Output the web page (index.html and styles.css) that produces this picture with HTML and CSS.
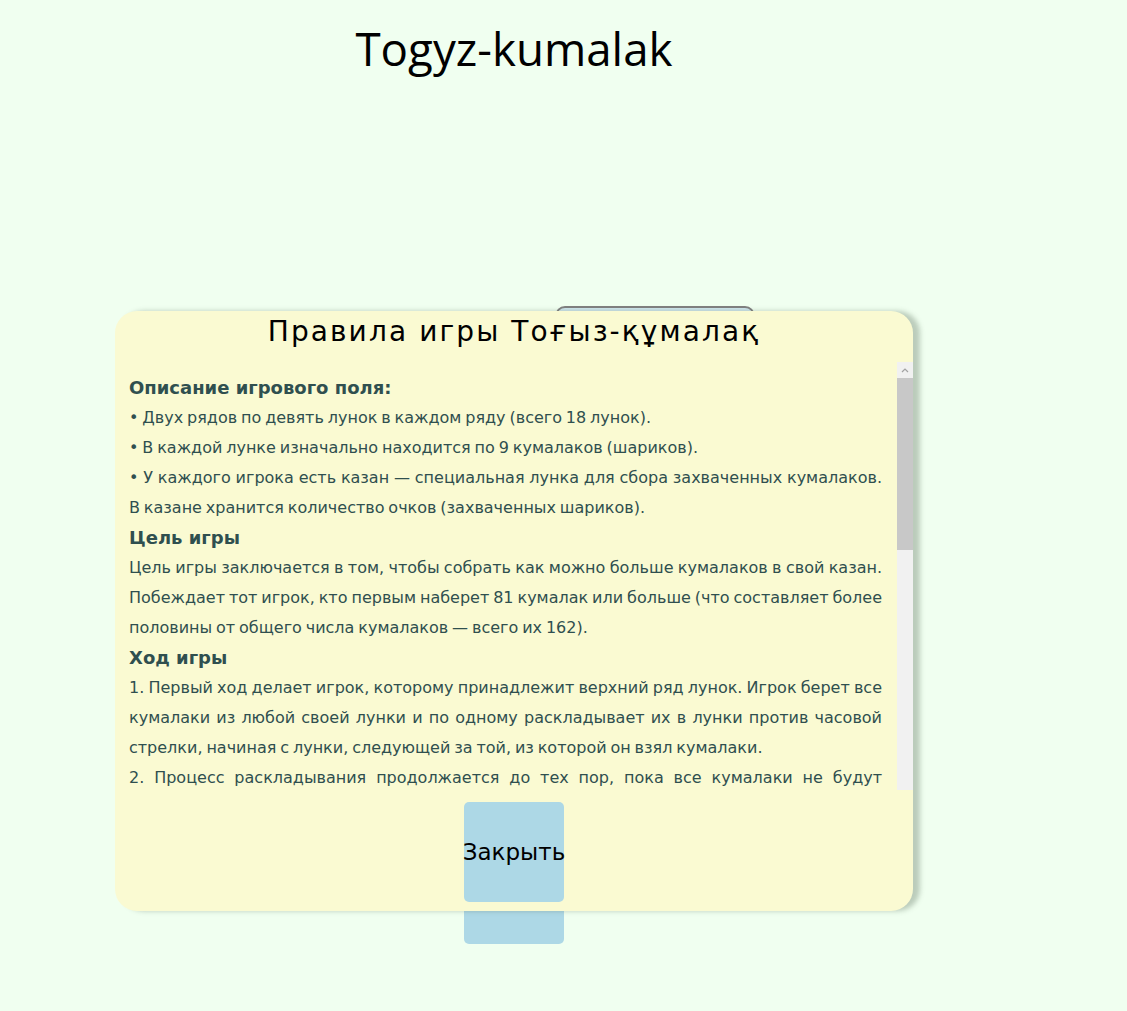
FILE: index.html
```html
<!DOCTYPE html>
<html lang="ru">
<head>
<meta charset="utf-8">
<title>Togyz-kumalak</title>
<link rel="stylesheet" href="styles.css">
</head>
<body>
<div class="page">
  <h1 class="title">Togyz-kumalak</h1>
  <button class="rules-btn"></button>
  <div class="under-btn"></div>
</div>
<div class="modal">
  <h2 class="modal-title">Правила игры Тоғыз-құмалақ</h2>
  <div class="rules-wrap">
    <div class="rules">
      <h3>Описание игрового поля:</h3>
      <p>• Двух рядов по девять лунок в каждом ряду (всего 18 лунок).</p>
      <p>• В каждой лунке изначально находится по 9 кумалаков (шариков).</p>
      <p>• У каждого игрока есть казан — специальная лунка для сбора захваченных кумалаков. В&nbsp;казане хранится количество очков (захваченных шариков).</p>
      <h3>Цель игры</h3>
      <p>Цель игры заключается в том, чтобы собрать как можно больше кумалаков в свой казан. Побеждает тот игрок, кто первым наберет 81 кумалак или больше (что составляет более половины от общего числа кумалаков — всего их 162).</p>
      <h3>Ход игры</h3>
      <p>1. Первый ход делает игрок, которому принадлежит верхний ряд лунок. Игрок берет все кумалаки из любой своей лунки и по одному раскладывает их в лунки против часовой стрелки, начиная с лунки, следующей за той, из которой он взял кумалаки.</p>
      <p>2. Процесс раскладывания продолжается до тех пор, пока все кумалаки не будут разложены. Если в лунке находится только один кумалак, он перекладывается в следующую лунку.</p>
      <p>3. Если последний кумалак попадает в лунку противника и количество кумалаков в ней становится чётным, игрок забирает все кумалаки из этой лунки в свой казан.</p>
      <h3>Туздык</h3>
      <p>4. Если последний кумалак попадает в лунку противника и в ней оказывается ровно три кумалака, игрок может объявить эту лунку своим туздыком.</p>
      <h3>Окончание игры</h3>
      <p>Игра заканчивается, когда один из игроков набирает 82 кумалака.</p>
    </div>
    <div class="scrollbar" aria-hidden="true">
      <div class="sb-arrow">
        <svg width="16" height="16" viewBox="0 0 16 16"><path d="M5 10 L8 7 L11 10" fill="none" stroke="#a3a3a3" stroke-width="1.2"/></svg>
      </div>
      <div class="sb-thumb"></div>
      <div class="sb-track"></div>
    </div>
  </div>
  <div class="modal-actions">
    <button class="close-btn">Закрыть</button>
  </div>
</div>
</body>
</html>
```

FILE: styles.css
```css
html, body {
  margin: 0;
  padding: 0;
}
body {
  background: #f0fff0;
  min-height: 1011px;
  font-family: "DejaVu Sans", Verdana, sans-serif;
}
.page {
  width: 1028px;
  text-align: center;
}
.title {
  margin: 0;
  padding-top: 20px;
  font-family: "Open Sans", "Noto Sans", sans-serif;
  font-weight: 400;
  font-size: 45.7px;
  line-height: 56px;
  color: #000;
}
.rules-btn {
  position: absolute;
  left: 555px;
  top: 306px;
  width: 200px;
  height: 40px;
  background: #cfe7ee;
  border: 2px solid #808080;
  border-radius: 10px;
}
.under-btn {
  position: absolute;
  left: 464px;
  top: 860px;
  width: 100px;
  height: 84px;
  background: #add8e6;
  border-radius: 5px;
}
.modal {
  position: absolute;
  left: 115px;
  top: 311px;
  width: 798px;
  height: 600px;
  box-sizing: border-box;
  padding: 3px 0 10px 14px;
  background: #fafad2;
  border-radius: 22px;
  box-shadow: 7px 0 5px rgba(90, 110, 90, 0.35);
  display: flex;
  flex-direction: column;
}
.modal-title {
  margin: 0 0 12px;
  padding-right: 14px;
  font-family: "DejaVu Sans", Verdana, sans-serif;
  font-weight: 400;
  font-size: 28px;
  letter-spacing: 2.1px;
  line-height: 36px;
  text-align: center;
  color: #000;
}
.rules-wrap {
  height: 428px;
  display: flex;
}
.rules {
  flex: 1;
  min-width: 0;
  overflow: hidden;
  padding: 11px 15px 0 0;
  color: #2f4f4f;
  font-size: 16px;
  word-spacing: -1.2px;
  text-align: justify;
}
.rules h3 {
  margin: 1px 0 1px;
  font-size: 18px;
  line-height: 28px;
  font-weight: 700;
  word-spacing: 0;
}
.rules p {
  margin: 0;
  line-height: 30px;
}
.scrollbar {
  width: 16px;
  display: flex;
  flex-direction: column;
  background: #f1f1f1;
}
.sb-arrow {
  height: 16px;
  display: flex;
}
.sb-thumb {
  height: 172px;
  background: #c8c8c8;
}
.sb-track {
  flex: 1;
}
.modal-actions {
  margin-top: 12px;
  padding-right: 14px;
  display: flex;
  justify-content: center;
}
.close-btn {
  width: 100px;
  height: 100px;
  padding: 0;
  border: none;
  border-radius: 5px;
  background: #add8e6;
  color: #000;
  font-family: "DejaVu Sans", sans-serif;
  font-size: 23px;
  white-space: nowrap;
  display: flex;
  align-items: center;
  justify-content: center;
}
```
